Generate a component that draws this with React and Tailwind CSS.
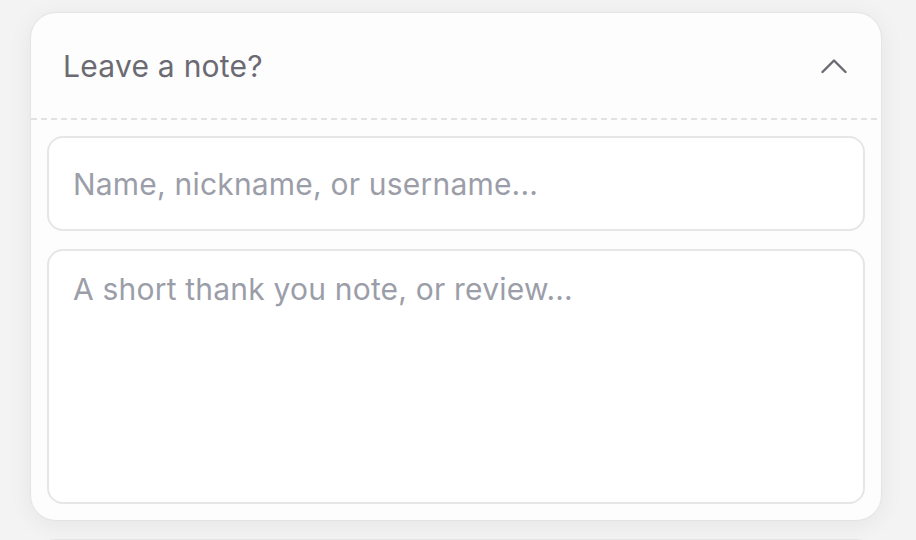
import { useState } from 'react';

export default function App() {
  const [open, setOpen] = useState(true);

  return (
    <div className="h-[540px] w-[916px] overflow-hidden bg-[#f3f3f3] px-[30px] pt-[12px] font-['Inter','Noto_Sans',sans-serif]">
      <div className="w-[852px] rounded-[26px] border border-[#e4e4e4] bg-[#fdfdfd] shadow-[0_4px_24px_rgba(0,0,0,0.06)]">
        <button
          type="button"
          onClick={() => setOpen(!open)}
          className="flex h-[105px] w-full items-center justify-between rounded-t-[26px] pl-[32px] pr-[34px] text-left"
        >
          <span className="text-[30px] leading-none tracking-[0.25px] text-[#6b6a72]">Leave a note?</span>
          <svg width="26" height="16" viewBox="0 0 26 16" fill="none" className={open ? '' : 'rotate-180'}>
            <polyline points="1.5,14 13,2.5 24.5,14" stroke="#6b6a72" strokeWidth="2.4" strokeLinecap="round" strokeLinejoin="round" />
          </svg>
        </button>
        <div className="h-[2px] bg-[repeating-linear-gradient(to_right,#e2e2e2_0_6px,transparent_6px_10px)]" />
        {open && (
          <div className="flex flex-col gap-[18px] px-[16px] pb-[16px] pt-[16px]">
            <input
              type="text"
              placeholder="Name, nickname, or username..."
              className="h-[95px] w-full rounded-[16px] border-2 border-[#e6e6e6] bg-white px-[24px] text-[30px] tracking-[0.2px] text-[#333] outline-none placeholder:text-[#9b9ea8]"
            />
            <textarea
              placeholder="A short thank you note, or review..."
              className="h-[255px] w-full resize-none rounded-[16px] border-2 border-[#e6e6e6] bg-white px-[24px] py-[20px] text-[30px] leading-[1.2] tracking-[0.2px] text-[#333] outline-none placeholder:text-[#9b9ea8]"
            />
          </div>
        )}
      </div>
      <div className="mt-[18px] h-[40px] w-[852px] rounded-t-[26px] border border-[#e4e4e4] bg-[#fdfdfd]" />
    </div>
  );
}
